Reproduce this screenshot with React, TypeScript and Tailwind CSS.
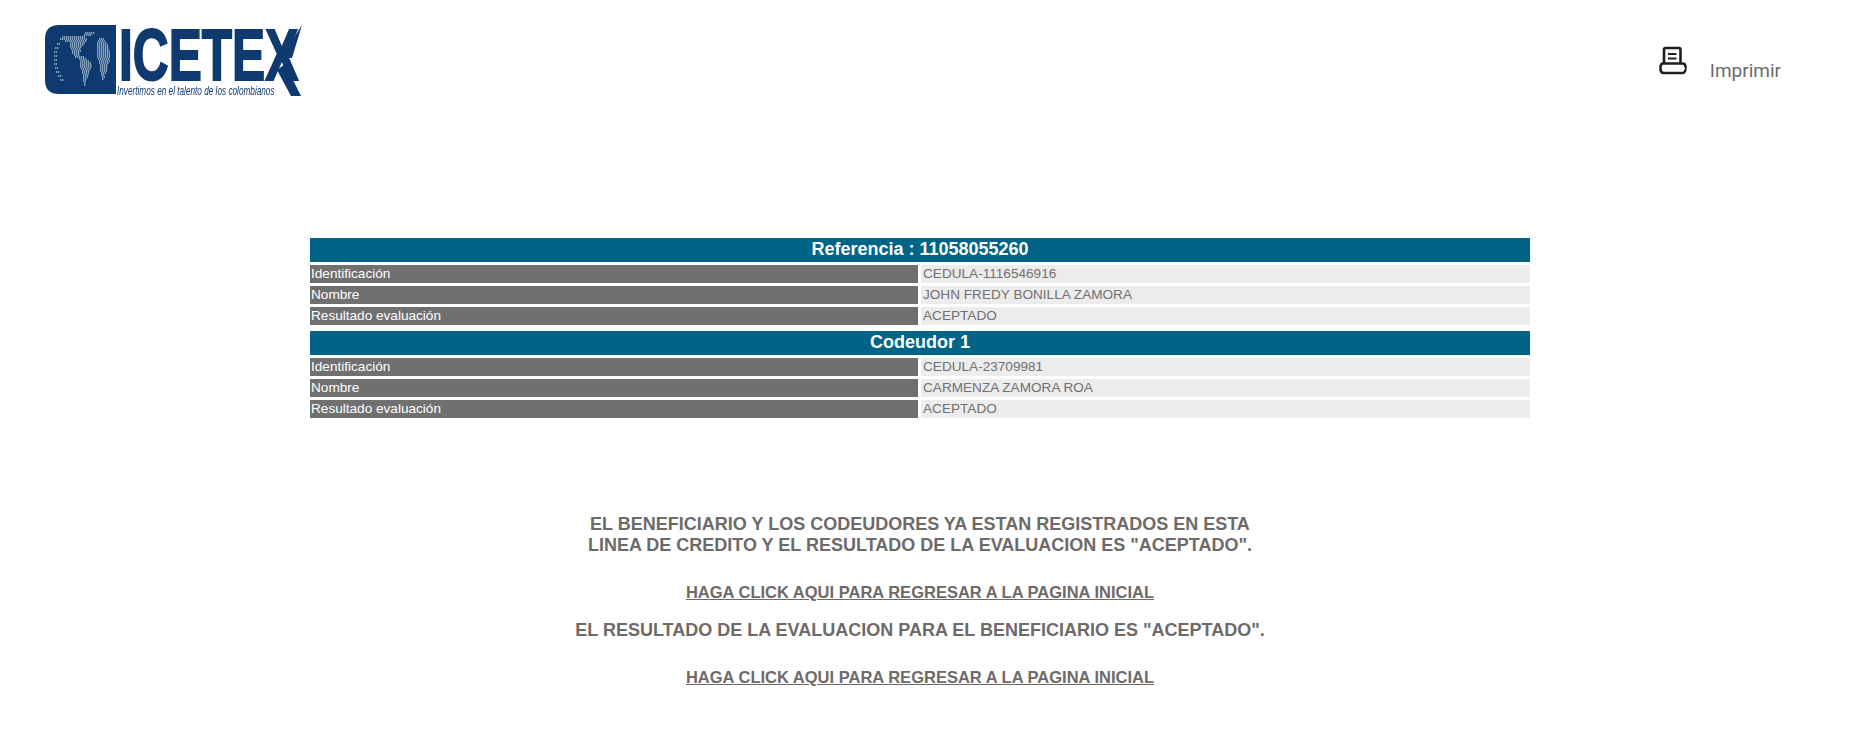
import { Fragment } from "react";

const blocks = [
  {
    title: "Referencia : 11058055260",
    rows: [
      ["Identificación", "CEDULA-1116546916"],
      ["Nombre", "JOHN FREDY BONILLA ZAMORA"],
      ["Resultado evaluación", "ACEPTADO"],
    ],
  },
  {
    title: "Codeudor 1",
    rows: [
      ["Identificación", "CEDULA-23709981"],
      ["Nombre", "CARMENZA ZAMORA ROA"],
      ["Resultado evaluación", "ACEPTADO"],
    ],
  },
];

// dotted land on the logo's globe: [y, from, to]
const landBands = [
  [9, 40, 50], [11, 39, 47],
  [13, 17, 40], [15, 15, 42], [17, 20, 42], [19, 25, 40], [21, 25, 39], [23, 25, 37], [25, 26, 36], [27, 27, 36], [29, 27, 35], [31, 29, 35],
  [33, 30, 39], [35, 34, 42], [37, 35, 44], [39, 35, 46], [41, 35, 47], [43, 35, 47], [45, 36, 46], [47, 37, 45], [49, 37, 44], [51, 38, 44], [53, 38, 43], [55, 38, 42], [57, 38, 41], [59, 39, 41], [61, 39, 41],
  [15, 54, 59], [17, 53, 60], [19, 52, 62], [21, 52, 63], [23, 52, 64], [25, 52, 64], [27, 52, 65], [29, 52, 65], [31, 52, 65], [33, 52, 65], [35, 53, 65], [37, 54, 65], [39, 54, 64], [41, 55, 63], [43, 55, 63], [45, 55, 62], [47, 55, 62], [49, 56, 61], [51, 56, 60], [53, 57, 60], [55, 57, 59],
  [20, 12, 15], [24, 10, 14], [28, 9, 12], [32, 9, 12], [36, 9, 12], [40, 9, 12], [44, 10, 13], [48, 11, 15], [52, 13, 17], [56, 15, 19],
];

function Logo() {
  return (
    <svg width="262" height="76" viewBox="0 0 262 76" className="block blur-[0.4px]">
      <path d="M14 1 H71 V70 H14 Q0 70 0 56 V15 Q0 1 14 1 Z" fill="#0f3a70" />
      {landBands.map(([y, a, b]) => (
        <line key={`${y}-${a}`} x1={a} x2={b} y1={y} y2={y} stroke="#a9bfd0" strokeWidth="1.4" strokeDasharray="1.4 0.6" />
      ))}
      <text transform="translate(74 56) scale(0.68 1)" fontFamily="'Liberation Sans', sans-serif" fontWeight="700" fontSize="73" fill="#0f3a70" stroke="#0f3a70" strokeWidth="2">
        ICETEX
      </text>
      <path d="M236 34 L257 1 L247 34 Z" fill="#0f3a70" />
      <path d="M240 40 L256 72 L246 72 L232 46 Z" fill="#0f3a70" />
      <text transform="translate(72 71) scale(0.633 1)" fontFamily="'Liberation Sans', sans-serif" fontStyle="italic" fontSize="13" fill="#0f3a70">
        Invertimos en el talento de los colombianos
      </text>
    </svg>
  );
}

function PrinterIcon() {
  return (
    <svg width="28" height="30" viewBox="0 0 28 30" fill="none" stroke="#1f1f1f" strokeWidth="2.6" className="block">
      <path d="M5 17 V3.5 Q5 2 6.5 2 H20 Q21.5 2 21.5 3.5 V17" />
      <path d="M4 17.5 H23.5 Q26.5 17.5 26.5 21 Q26.5 27 24 27 H4.5 Q1.5 27 1.5 22 Q1.5 17.5 4 17.5 Z" />
      <path d="M9 8 H17.5" strokeWidth="2" />
      <path d="M9 12.5 H17.5" strokeWidth="2" />
      <path d="M7 22.5 H26" stroke="#ffffff" strokeWidth="2" />
    </svg>
  );
}

export default function App() {
  return (
    <div className="min-h-[754px] bg-white pr-[15px] font-['Liberation_Sans',Arial,sans-serif] text-[#6d6a69]">
      <header className="flex h-[100px] items-start justify-between pl-[45px] pr-[59px] pt-[24px]">
        <Logo />
        <div className="flex items-start pt-[22px]">
          <PrinterIcon />
          <span className="ml-[23px] mt-[13px] font-['Roboto',sans-serif] text-[19px] leading-[24px] text-[#6b6b6b]">Imprimir</span>
        </div>
      </header>

      <main className="mx-auto mt-[138px] w-[1220px]">
        {blocks.map((block, i) => (
          <Fragment key={block.title}>
            <h2 className={`flex h-[24px] items-center justify-center bg-[#006486] pb-[1px] text-[18px] font-bold text-white ${i > 0 ? "mt-[6px]" : ""}`}>
              {block.title}
            </h2>
            {block.rows.map(([label, value]) => (
              <div key={label} className="mt-[3px] grid h-[18px] grid-cols-[608px_1fr] gap-x-[3px] text-[13.6px] leading-[18px]">
                <div className="bg-[#707070] pl-[1px] text-white">{label}</div>
                <div className="bg-[#ececec] pl-[2px] text-[#727070]">{value}</div>
              </div>
            ))}
          </Fragment>
        ))}
      </main>

      <section className="mt-[96px] flex flex-col items-center text-center text-[18px] font-bold leading-[21px]">
        <p>
          EL BENEFICIARIO Y LOS CODEUDORES YA ESTAN REGISTRADOS EN ESTA
          <br />
          LINEA DE CREDITO Y EL RESULTADO DE LA EVALUACION ES "ACEPTADO".
        </p>
        <a href="#" className="mt-[26px] text-[16.5px] underline">HAGA CLICK AQUI PARA REGRESAR A LA PAGINA INICIAL</a>
        <p className="mt-[17px]">EL RESULTADO DE LA EVALUACION PARA EL BENEFICIARIO ES "ACEPTADO".</p>
        <a href="#" className="mt-[26px] text-[16.5px] underline">HAGA CLICK AQUI PARA REGRESAR A LA PAGINA INICIAL</a>
      </section>
    </div>
  );
}
